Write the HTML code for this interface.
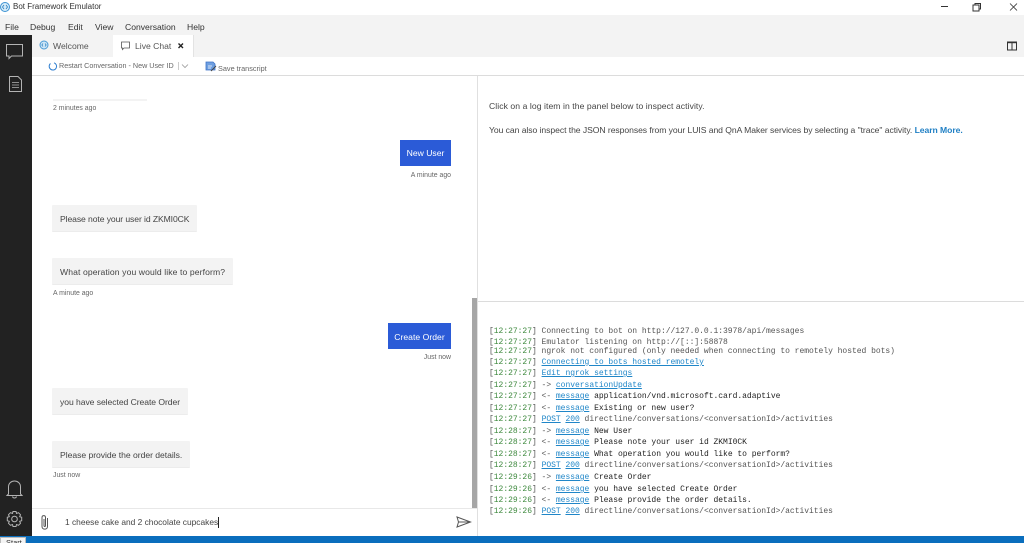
<!DOCTYPE html>
<html><head><meta charset="utf-8"><style>
html,body{margin:0;padding:0;width:1024px;height:543px;overflow:hidden;background:#fff}
body{position:relative;font-family:"Liberation Sans",sans-serif;color:#333}
.a{position:absolute}
.t{position:absolute;white-space:nowrap;line-height:12px;font-size:8.6px}
.b{position:absolute;background:#f3f3f3;border:0;border-bottom:1px solid #ececec;border-radius:1px;box-sizing:border-box;white-space:nowrap;font-size:8.6px;color:#444;padding-left:8px}
.u{position:absolute;background:#2b5bd7;color:#fff;white-space:nowrap;font-size:8.6px;text-align:center}
.time{position:absolute;white-space:nowrap;font-size:6.9px;color:#666;line-height:10px}
.l{position:absolute;left:489px;white-space:pre;font:8px/10px "Liberation Mono",monospace;letter-spacing:-.025px;color:#555}
.l i{font-style:normal;color:#3f8a3f}
.l u{color:#1f86c8}
.l b{font-weight:normal;color:#222}
</style></head><body>
<div class="a" style="left:0;top:0;width:1024px;height:15px;background:#fff"></div>
<svg class="a" style="left:0;top:0" width="12" height="14"><circle cx="5" cy="7" r="4.500" fill="#d5ebf8" stroke="#3c93d3"/><path d="M4 5L2.500 7 4 9M6 5L7.500 7 6 9" fill="none" stroke="#2a7fc0" stroke-width=".8"/></svg>
<div class="t" style="left:13px;top:1px;font-size:8px;color:#333">Bot Framework Emulator</div>
<svg class="a" style="left:930px;top:0" width="94" height="15" fill="none" stroke="#333" stroke-width="1"><path d="M11 6.500H18"/><path d="M43 5h6v6h-6zM45 5V3.500h5.500V9H49"/><path d="M80 3.500l7 7M87 3.500l-7 7" stroke-width=".8"/></svg>
<div class="a" style="left:0;top:15px;width:1024px;height:20px;background:#f3f3f3"></div>
<div class="t" style="left:5px;top:21px;color:#333">File</div>
<div class="t" style="left:30px;top:21px;color:#333">Debug</div>
<div class="t" style="left:68px;top:21px;color:#333">Edit</div>
<div class="t" style="left:95px;top:21px;color:#333">View</div>
<div class="t" style="left:125px;top:21px;color:#333">Conversation</div>
<div class="t" style="left:187px;top:21px;color:#333">Help</div>

<div class="a" style="left:0;top:35px;width:32px;height:508px;background:#222"></div>
<svg class="a" style="left:0;top:35px" width="32" height="60" fill="none" stroke="#b4b4b4" stroke-width="1"><path d="M6.500 9.500H22.500V21H11.500L9 23.500V21H6.500Z"/><path d="M9.500 41.500H18L21.500 45V56.500H9.500Z"/><path d="M12 47.500H19M12 50H19M12 52.500H19" stroke-width=".8"/></svg>
<svg class="a" style="left:0;top:475px" width="32" height="60" fill="none" stroke="#b4b4b4" stroke-width="1"><path d="M8.500 19V12C8.500 4 20.500 4 20.500 12V19L22 20.500H7Z"/><path d="M12.500 21.500C13 23.500 16 23.500 16.500 21.500"/><circle cx="14.500" cy="44" r="2.800"/><path d="M13 36.500h3l.5 2 2-.8 2 2-.8 2 2 .6v3.400l-2 .6.8 2-2 2-2-.8-.5 2h-3l-.5-2-2 .8-2-2 .8-2-2-.6v-3.400l2-.6-.8-2 2-2 2 .8z"/></svg>

<div class="a" style="left:32px;top:35px;width:992px;height:22px;background:#f3f3f3"></div>
<svg class="a" style="left:39px;top:40px" width="11" height="11"><circle cx="5" cy="5" r="4" fill="#cfe6f6" stroke="#4a9ad6"/><path d="M4 3.500L2.800 5 4 6.500M6 3.500L7.200 5 6 6.500" fill="none" stroke="#2a7fc0" stroke-width=".7"/></svg>
<div class="t" style="left:53px;top:40px;color:#555">Welcome</div>
<div class="a" style="left:113px;top:35px;width:81px;height:22px;background:#fff;border-right:1px solid #e3e3e3;box-sizing:border-box"></div>
<svg class="a" style="left:120px;top:41px" width="12" height="10" fill="none" stroke="#555" stroke-width=".8"><path d="M1.500 1H9.500V7H4L2.500 8.500V7H1.500Z"/></svg>
<div class="t" style="left:135px;top:40px;color:#555">Live Chat</div>
<svg class="a" style="left:177px;top:42px" width="8" height="8" stroke="#222" stroke-width="1.400"><path d="M1.500 1.500l4.500 4.500M6 1.500L1.500 6"/></svg>
<svg class="a" style="left:1006px;top:41px" width="12" height="10" fill="none" stroke="#333" stroke-width="1"><path d="M1.500 1H10.500V9H1.500ZM6 1V9"/><path d="M1 1.500H11" stroke-width="1.400"/></svg>

<div class="a" style="left:32px;top:57px;width:992px;height:18px;background:#fff"></div>
<div class="a" style="left:32px;top:75px;width:992px;height:1px;background:#dcdcdc"></div>
<svg class="a" style="left:48px;top:61px" width="10" height="11" fill="none" stroke="#2f7fd0" stroke-width="1"><path d="M6 1.800A3.700 3.700 0 1 1 2.500 2.500"/></svg>
<div class="t" style="left:59px;top:60px;font-size:7.2px;color:#666">Restart Conversation - New User ID</div>
<div class="a" style="left:178px;top:62px;width:1px;height:8px;background:#ccc"></div>
<svg class="a" style="left:181px;top:63px" width="9" height="6" fill="none" stroke="#999" stroke-width=".8"><path d="M1 1.500L4 4.500 7 1.500"/></svg>
<svg class="a" style="left:205px;top:61px" width="12" height="12"><path d="M1 1H8L10 3V9H1Z" fill="#6f9fe0" stroke="#3c73c8" stroke-width=".8"/><path d="M3 5H7M3 7H6" stroke="#fff" stroke-width=".8"/><path d="M6 10L11 5" stroke="#444" stroke-width="1"/></svg>
<div class="t" style="left:218px;top:63px;font-size:7.3px;color:#666">Save transcript</div>

<div class="a" style="left:53px;top:99px;width:94px;height:2px;background:#f3f3f3"></div>
<div class="time" style="left:53px;top:104px">2 minutes ago</div>
<div class="u" style="left:400px;top:140px;width:51px;height:26px;line-height:27px">New User</div>
<div class="time" style="right:573px;top:171px">A minute ago</div>
<div class="b" style="left:52px;top:205px;width:145px;height:27px;line-height:28px;letter-spacing:-.09px">Please note your user id ZKMI0CK</div>
<div class="b" style="left:52px;top:258px;width:181px;height:27px;line-height:28px;letter-spacing:.1px">What operation you would like to perform?</div>
<div class="time" style="left:53px;top:289px">A minute ago</div>
<div class="u" style="left:388px;top:323px;width:63px;height:26px;line-height:28px;letter-spacing:.03px">Create Order</div>
<div class="time" style="right:573px;top:353px">Just now</div>
<div class="b" style="left:52px;top:388px;width:136px;height:27px;line-height:28px;letter-spacing:-.06px">you have selected Create Order</div>
<div class="b" style="left:52px;top:441px;width:138px;height:27px;line-height:28px;letter-spacing:-.03px">Please provide the order details.</div>
<div class="time" style="left:53px;top:471px">Just now</div>

<div class="a" style="left:472px;top:298px;width:5px;height:210px;background:#a6a6a6"></div>
<div class="a" style="left:477px;top:76px;width:1px;height:460px;background:#e0e0e0"></div>
<div class="a" style="left:478px;top:301px;width:546px;height:1px;background:#dcdcdc"></div>
<div class="a" style="left:32px;top:508px;width:445px;height:1px;background:#e8e8e8"></div>
<svg class="a" style="left:38px;top:514px" width="14" height="17" fill="none" stroke="#555" stroke-width="1"><path d="M9.500 4V12.500C9.500 16 4 16 4 12.500V3.500C4 1 7.500 1 7.500 3.500V11.500C7.500 12.800 6 12.800 6 11.500V5"/></svg>
<div class="t" style="left:65px;top:516px;font-size:8.4px;color:#444">1 cheese cake and 2 chocolate cupcakes</div>
<div class="a" style="left:218px;top:517px;width:1px;height:11px;background:#222"></div>
<svg class="a" style="left:455px;top:515px" width="17" height="14" fill="none" stroke="#555" stroke-width="1"><path d="M2 2L15.500 7 2 12 3.500 7ZM3.500 7H15"/></svg>

<div class="l" style="top:327px">[<i>12:27:27</i>] Connecting to bot on http://127.0.0.1:3978/api/messages</div>
<div class="l" style="top:338px">[<i>12:27:27</i>] Emulator listening on http://[::]:58878</div>
<div class="l" style="top:347px">[<i>12:27:27</i>] ngrok not configured (only needed when connecting to remotely hosted bots)</div>
<div class="l" style="top:358px">[<i>12:27:27</i>] <u>Connecting to bots hosted remotely</u></div>
<div class="l" style="top:369px">[<i>12:27:27</i>] <u>Edit ngrok settings</u></div>
<div class="l" style="top:381px">[<i>12:27:27</i>] -&gt; <u>conversationUpdate</u></div>
<div class="l" style="top:392px">[<i>12:27:27</i>] &lt;- <u>message</u> <b>application/vnd.microsoft.card.adaptive</b></div>
<div class="l" style="top:404px">[<i>12:27:27</i>] &lt;- <u>message</u> <b>Existing or new user?</b></div>
<div class="l" style="top:415px">[<i>12:27:27</i>] <u>POST</u> <u>200</u> directline/conversations/&lt;conversationId&gt;/activities</div>
<div class="l" style="top:427px">[<i>12:28:27</i>] -&gt; <u>message</u> <b>New User</b></div>
<div class="l" style="top:438px">[<i>12:28:27</i>] &lt;- <u>message</u> <b>Please note your user id ZKMI0CK</b></div>
<div class="l" style="top:450px">[<i>12:28:27</i>] &lt;- <u>message</u> <b>What operation you would like to perform?</b></div>
<div class="l" style="top:461px">[<i>12:28:27</i>] <u>POST</u> <u>200</u> directline/conversations/&lt;conversationId&gt;/activities</div>
<div class="l" style="top:473px">[<i>12:29:26</i>] -&gt; <u>message</u> <b>Create Order</b></div>
<div class="l" style="top:485px">[<i>12:29:26</i>] &lt;- <u>message</u> <b>you have selected Create Order</b></div>
<div class="l" style="top:496px">[<i>12:29:26</i>] &lt;- <u>message</u> <b>Please provide the order details.</b></div>
<div class="l" style="top:507px">[<i>12:29:26</i>] <u>POST</u> <u>200</u> directline/conversations/&lt;conversationId&gt;/activities</div>

<div class="t" style="left:489px;top:100px;font-size:8.6px;letter-spacing:.07px;color:#444">Click on a log item in the panel below to inspect activity.</div>
<div class="t" style="left:489px;top:124px;font-size:8.6px;letter-spacing:-.055px;color:#444">You can also inspect the JSON responses from your LUIS and QnA Maker services by selecting a "trace" activity. <b style="color:#1f7fc4">Learn More.</b></div>

<div class="a" style="left:0;top:536px;width:1024px;height:7px;background:#0a6ebd"></div>
<div class="a" style="left:0;top:537px;width:26px;height:6px;background:#f4f4f4;border:1px solid #bbb;border-bottom:0;box-sizing:border-box;overflow:hidden;font-size:7.5px;line-height:9px;padding-left:5px;color:#333">Start</div>
</body></html>
